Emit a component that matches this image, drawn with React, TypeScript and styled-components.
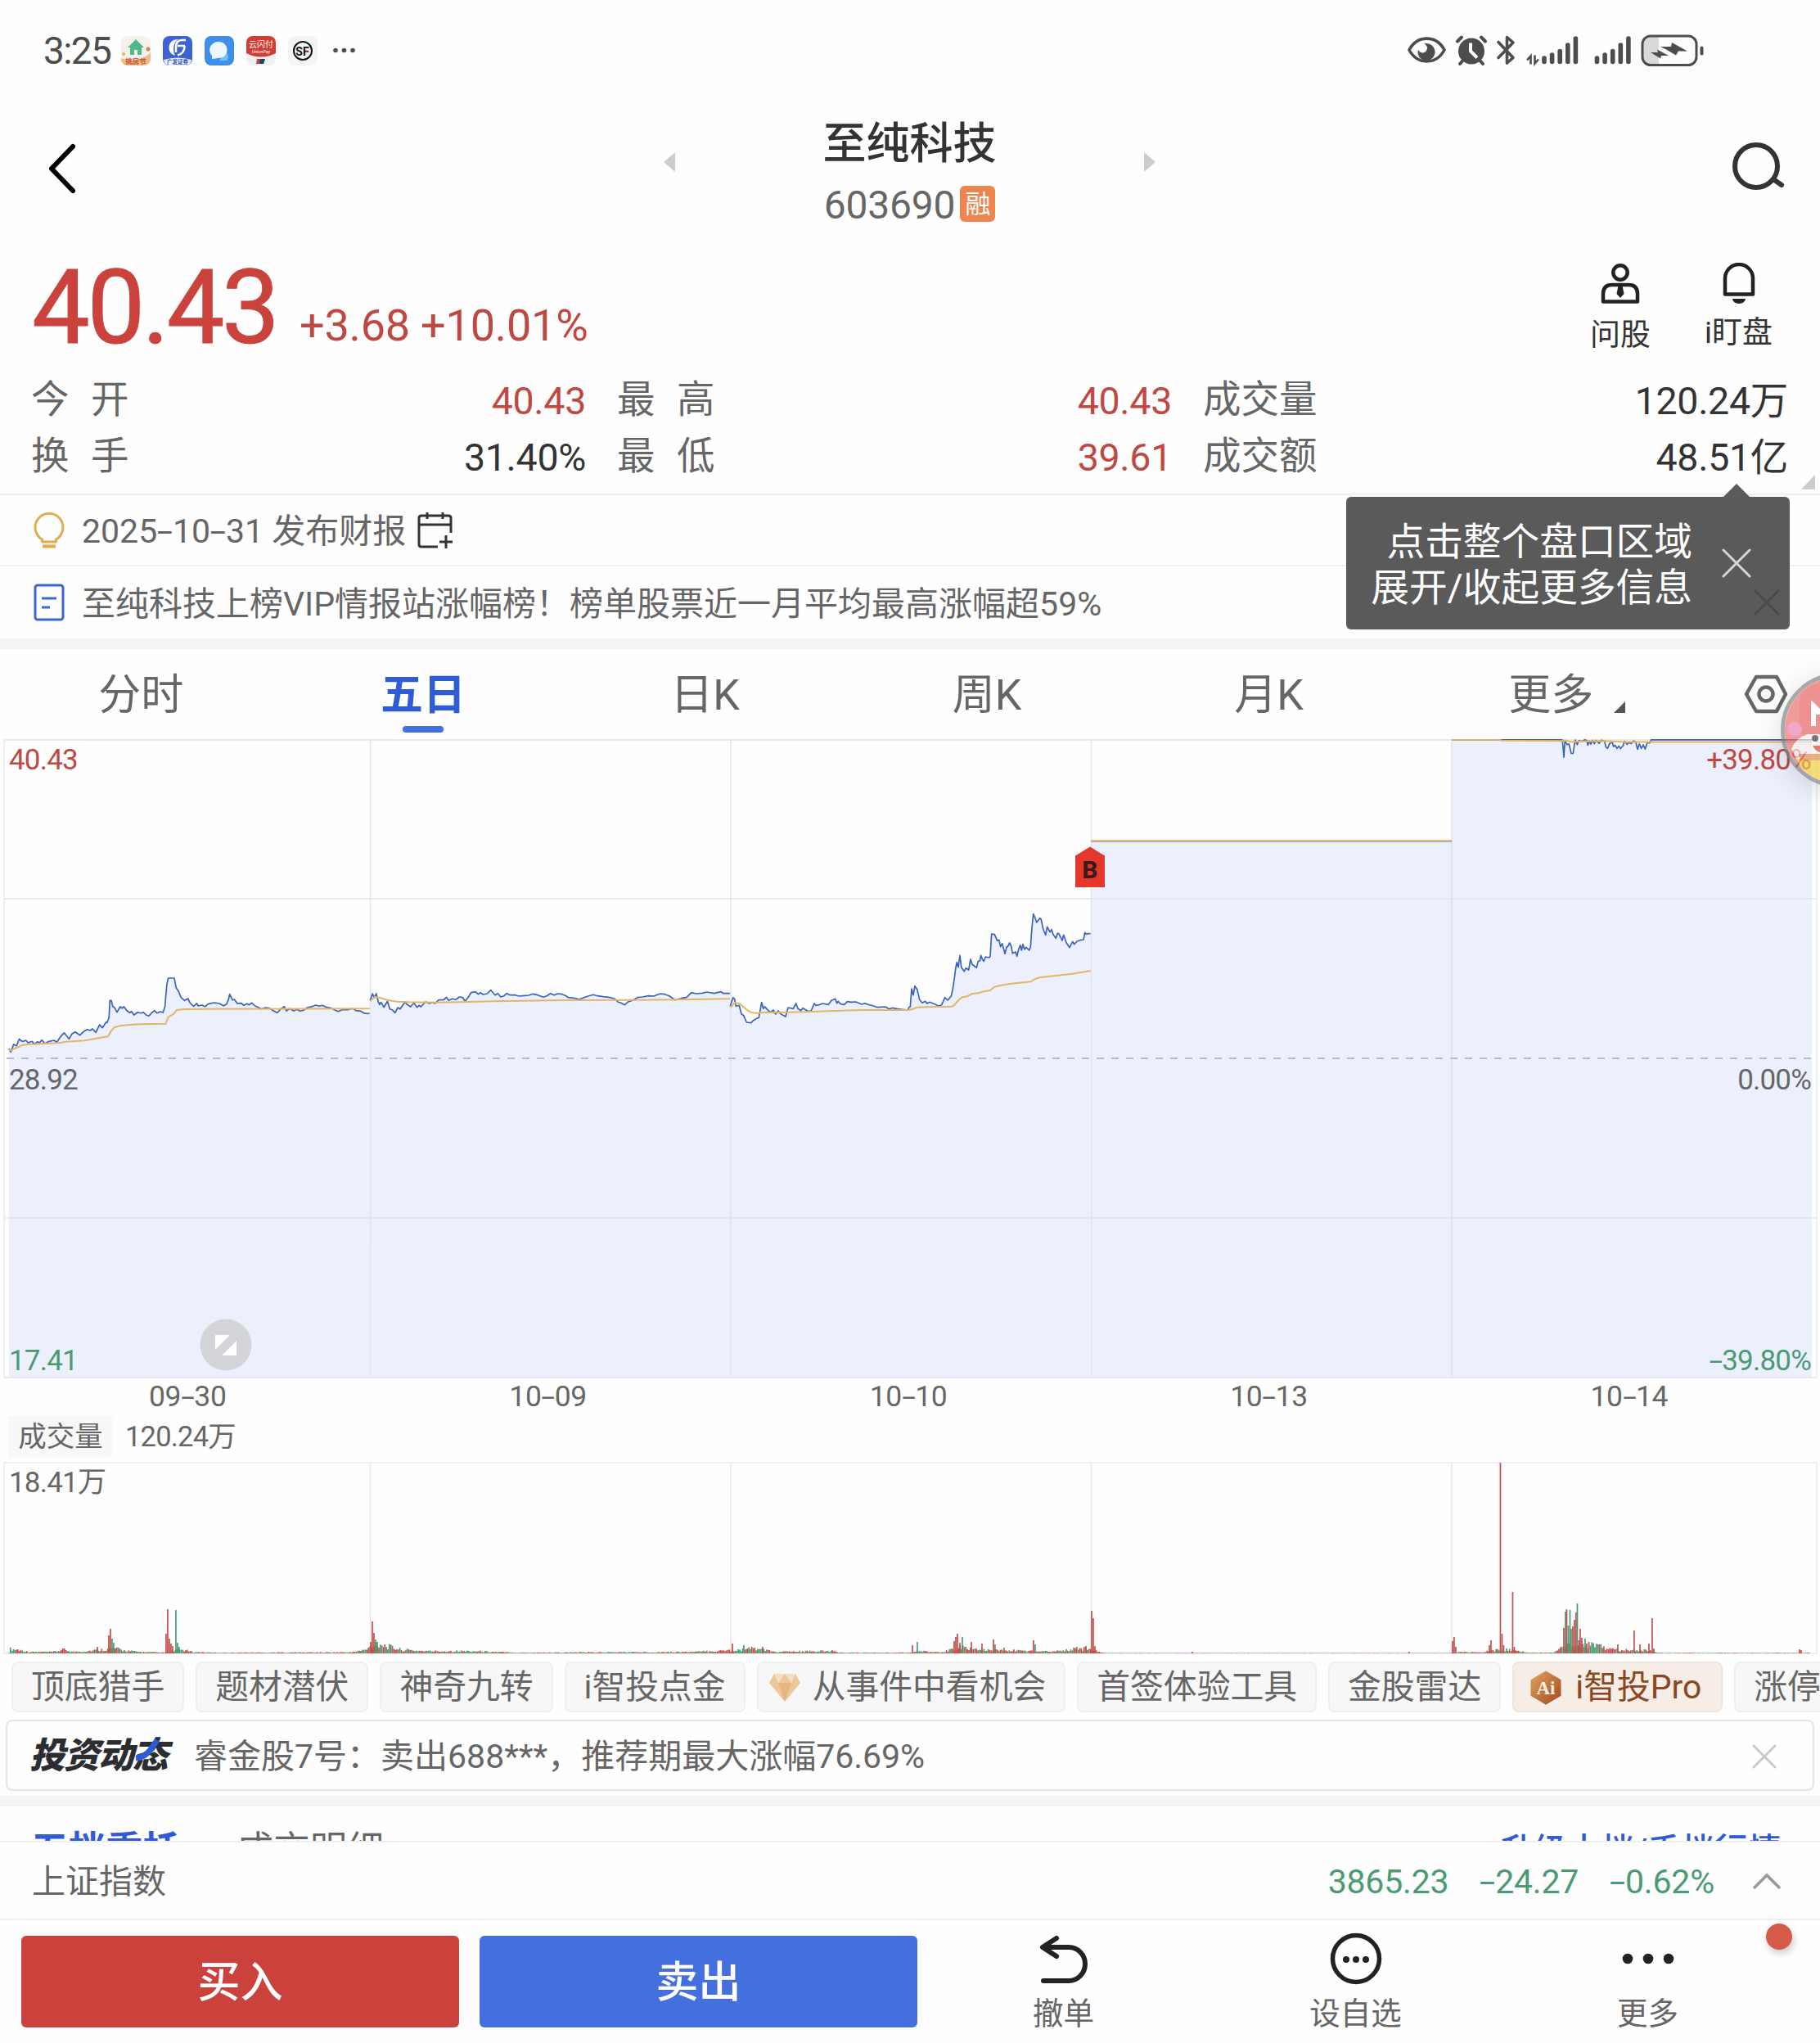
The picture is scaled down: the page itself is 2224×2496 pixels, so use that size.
import styled, { createGlobalStyle, css } from 'styled-components';

const red = '#cb423c';
const green = '#4a9a73';
const blue = '#2f5bd8';
const grey = '#666666';
const dark = '#333333';

const GlobalStyle = createGlobalStyle`
  * {
    box-sizing: border-box;
  }
  body {
    margin: 0;
    background: #fefefe;
    font-family: Roboto, "Noto Sans CJK SC", sans-serif;
    color: ${grey};
  }
  svg {
    display: block;
    flex: none;
  }
`;

const Page = styled.div`
  position: relative;
  display: flex;
  flex-direction: column;
  width: 2224px;
  height: 2496px;
  overflow: hidden;
  white-space: nowrap;
`;

// hyphen as wide as in the app's number font
const Dash = styled.i`
  display: inline-block;
  width: 0.46em;
  font-style: normal;
  text-align: center;
  transform: scaleX(1.7);
`;

const StatusBar = styled.div`
  display: flex;
  align-items: center;
  height: 122px;
  padding: 2px 141px 0 53px;
`;

const Clock = styled.span`
  width: 95px;
  font-size: 46px;
  line-height: 50px;
  letter-spacing: -1.6px;
  color: #4d4d4d;
`;

const AppIcons = styled.div`
  display: flex;
  gap: 15px;
  flex: 1;
`;

const Header = styled.div`
  display: flex;
  align-items: flex-start;
  justify-content: space-between;
  height: 178px;
  padding: 51px 41px 0 58px;
`;

const TitleArea = styled.div`
  display: flex;
  align-items: flex-start;
  justify-content: space-between;
  width: 603px;
  margin: 0 0 0 10px;
`;

const Arrow = styled.svg`
  margin-top: 12px;
`;

const TitleColumn = styled.div`
  display: flex;
  flex-direction: column;
  align-items: center;
  margin-top: -31px;
`;

const Title = styled.div`
  font-size: 53px;
  font-weight: 500;
  line-height: 68px;
  color: ${dark};
`;

const Code = styled.div`
  display: flex;
  align-items: center;
  gap: 6px;
  margin-top: 8px;
  font-size: 48px;
  line-height: 66px;
  letter-spacing: -0.2px;
`;

const Badge = styled.span`
  width: 43px;
  height: 44px;
  margin-top: -3px;
  border-radius: 6px;
  background: #ee854e;
  color: #fff;
  font-size: 31px;
  line-height: 46px;
  text-align: center;
`;

const Quote = styled.div`
  display: flex;
  height: 155px;
  padding: 21px 58px 0 39px;
`;

const Price = styled.div`
  width: 306px;
  font-size: 126px;
  line-height: 110px;
  letter-spacing: -3.4px;
  color: ${red};
  -webkit-text-stroke: 1px ${red};
`;

const Change = styled.div`
  margin: 44px 0 0 21px;
  font-size: 54px;
  line-height: 66px;
  letter-spacing: -0.2px;
  color: #c04843;
`;

const Shortcuts = styled.div`
  display: flex;
  gap: 66px;
  margin-left: auto;
`;

const Shortcut = styled.div<{ $lift?: boolean }>`
  display: flex;
  flex-direction: column;
  align-items: center;
  font-size: 37px;
  line-height: 44px;
  color: ${dark};

  span {
    margin-top: ${p => (p.$lift ? 14 : 17)}px;
  }
`;

const Stats = styled.div`
  position: relative;
  display: grid;
  grid-template-columns: 678px 678px 715px;
  grid-template-rows: 69px 69px;
  column-gap: 38px;
  height: 150px;
  padding-left: 38px;
  border-bottom: 2px solid #eeeeee;
`;

const Stat = styled.div<{ $up?: boolean }>`
  display: flex;
  justify-content: space-between;
  font-size: 46.5px;
  line-height: 69px;
  word-spacing: 15px;

  span {
    line-height: 67px;
  }
  b {
    font-weight: 400;
    letter-spacing: -0.3px;
    line-height: 70px;
    color: ${p => (p.$up ? '#c04843' : dark)};
  }
`;

const StatCorner = styled.svg`
  position: absolute;
  right: 6px;
  bottom: 5px;
`;

const Notice = styled.div<{ $line?: boolean }>`
  display: flex;
  align-items: center;
  height: 88px;
  padding-left: 41px;
  font-size: 41px;
  line-height: 60px;
  border-bottom: ${p => (p.$line ? '2px solid #f0f0f0' : 'none')};

  > span {
    margin: 3px 14px 0 21px;
  }
`;

const Tip = styled.div`
  position: absolute;
  left: 1645px;
  top: 607px;
  display: flex;
  align-items: center;
  justify-content: flex-end;
  width: 542px;
  height: 162px;
  padding-right: 47px;
  border-radius: 6px;
  background: rgba(72, 72, 72, 0.9);
  color: #fff;
  font-size: 46.7px;
  line-height: 56px;
  text-align: right;

  &::before {
    content: '';
    position: absolute;
    top: -16px;
    right: 49px;
    border: 16px solid transparent;
    border-top: 0;
    border-bottom-color: #5b5b5b;
  }

  div {
    padding-top: 3px;
  }

  svg {
    margin-left: 36px;
  }
`;

const GhostClose = styled.svg`
  position: absolute;
  right: 12px;
  bottom: 17px;
`;

const Band = styled.div`
  height: 13px;
  background: #f4f4f4;
`;

const Tabs = styled.div`
  display: flex;
  align-items: center;
  height: 110px;
`;

const Tab = styled.div<{ $active?: boolean }>`
  position: relative;
  flex: none;
  width: 344.6px;
  height: 110px;
  font-size: 52px;
  line-height: 113px;
  text-align: center;

  ${p =>
    p.$active &&
    css`
      font-weight: 700;
      color: ${blue};

      &::after {
        content: '';
        position: absolute;
        left: 147px;
        bottom: 8px;
        width: 50px;
        height: 8px;
        border-radius: 4px;
        background: #446fdf;
      }
    `}
`;

const MoreMark = styled.svg`
  position: absolute;
  right: 82px;
  bottom: 32px;
`;

const ChartBox = styled.div<{ $height: number }>`
  position: relative;
  height: ${p => p.$height}px;
`;

const AxisLabel = styled.span<{ $top: number; $right?: boolean; $color?: string }>`
  position: absolute;
  top: ${p => p.$top}px;
  ${p => (p.$right ? 'right: 11px' : 'left: 11px')};
  font-size: 35px;
  line-height: 44px;
  letter-spacing: -0.8px;
  color: ${p => p.$color || grey};
`;

const BuyMark = styled.div`
  position: absolute;
  left: 1314px;
  top: 131px;
  width: 36px;
  height: 50px;
  padding-top: 5px;
  background: #e5382d;
  clip-path: polygon(50% 0, 100% 22%, 100% 100%, 0 100%, 0 22%);
  color: #3a1a1c;
  font-size: 30px;
  font-weight: 800;
  line-height: 48px;
  text-align: center;
`;

const ExpandButton = styled.svg`
  position: absolute;
  left: 244px;
  top: 708px;
`;

const Dates = styled.div`
  display: flex;
  height: 45px;
  padding: 0 13px 0 9px;
  font-size: 35.5px;
  letter-spacing: -0.4px;
  line-height: 44px;

  > span {
    flex: 1;
    text-align: center;
  }
`;

const VolumeHead = styled.div`
  display: flex;
  align-items: center;
  gap: 15px;
  height: 57px;
  padding: 0 0 4px 10px;
  font-size: 34.5px;
  line-height: 51px;
`;

const VolumeName = styled.span`
  width: 128px;
  background: #f8f8f8;
  border-radius: 0 6px 6px 0;
  text-align: center;
`;

const VolumeValue = styled.span`
  letter-spacing: -0.8px;
`;

const Chips = styled.div`
  display: flex;
  gap: 14px;
  height: 80px;
  padding: 9px 0 0 14px;
  overflow: hidden;
`;

const Chip = styled.div<{ $pro?: boolean }>`
  display: flex;
  flex: none;
  align-items: center;
  gap: ${p => (p.$pro ? 16 : 15)}px;
  height: 62px;
  padding: 1px ${p => (p.$pro ? 24 : 22)}px 0;
  border: 2px solid ${p => (p.$pro ? '#f1e4da' : '#efefef')};
  border-radius: 8px;
  background: ${p => (p.$pro ? '#f6ede6' : '#f7f7f7')};
  color: ${p => (p.$pro ? '#8c4722' : grey)};
  font-size: 40.8px;
  line-height: 59px;

  svg {
    margin-left: ${p => (p.$pro ? -5 : -9)}px;
  }
`;

const News = styled.div`
  display: flex;
  align-items: center;
  height: 87px;
  margin: 0 7px 6px;
  padding: 2px 44px 0 27px;
  border: 2px solid #e5e5e5;
  border-radius: 8px;
  font-size: 41px;
  line-height: 60px;
`;

const NewsLogo = styled.span`
  position: relative;
  width: 174px;
  margin-right: 27px;
  font-size: 43.5px;
  font-weight: 900;
  font-style: italic;
  letter-spacing: -1.6px;
  color: #2c2d31;

  svg {
    position: absolute;
    left: 127px;
    top: 7px;
  }
`;

const NewsText = styled.span`
  flex: 1;
`;

const DepthTabs = styled.div`
  display: flex;
  gap: 66px;
  height: 42px;
  padding: 21px 47px 0 38px;
  overflow: hidden;
  font-size: 45px;
  line-height: 66px;

  b {
    width: 185px;
    font-size: 45.6px;
    color: ${blue};
  }
  a {
    margin-left: auto;
    font-size: 41px;
    font-weight: 500;
    color: ${blue};
  }
`;

const IndexRow = styled.div`
  display: flex;
  align-items: center;
  height: 97px;
  padding: 2px 46px 0 39px;
  border-top: 2px solid #efefef;
  border-bottom: 2px solid #efefef;
  font-size: 41px;
  line-height: 60px;

  span {
    flex: 1;
  }
  em {
    margin-right: 38px;
    font-style: normal;
    letter-spacing: -0.2px;
    color: ${green};
  }
  svg {
    margin-left: 7px;
  }
`;

const BottomBar = styled.div`
  position: relative;
  display: flex;
  height: 150px;
  padding: 19px 0 0 26px;
`;

const TradeButton = styled.div<{ $color: string }>`
  width: 535px;
  height: 112px;
  margin-right: 25px;
  border-radius: 6px;
  background: ${p => p.$color};
  color: #fff;
  font-size: 52px;
  font-weight: 500;
  line-height: 116px;
  text-align: center;
`;

const Action = styled.div`
  display: flex;
  flex-direction: column;
  align-items: center;
  width: 357px;
  margin-top: -6px;
  font-size: 37.5px;
  line-height: 50px;

  &:nth-child(3) {
    margin-left: -25px;
  }
  span {
    margin-top: 8px;
  }
`;

const RedDot = styled.i`
  position: absolute;
  left: 2158px;
  top: 4px;
  width: 32px;
  height: 32px;
  border-radius: 50%;
  background: #d65a4a;
  box-shadow: 2px 5px 8px rgba(0, 0, 0, 0.2);
`;

const FloatingBall = styled.div`
  position: absolute;
  left: 2176px;
  top: 822px;
  width: 140px;
  height: 140px;
  border: 5px solid #7e7e7e;
  border-radius: 50%;
  overflow: hidden;
  opacity: 0.66;
  box-shadow: 0 6px 30px rgba(0, 0, 0, 0.2);
`;

type Point = [number, number];

// "x,y x,y" in sample units -> chart pixels
function toPoints(src: string, ox: number, oy: number, kx: number, ky: number): Point[] {
  return src.split(' ').map(pair => {
    const [x, y] = pair.split(',').map(Number);
    return [x * kx + ox, y * ky + oy];
  });
}

const join = (pts: Point[]) => pts.map(([x, y]) => `${x.toFixed(1)},${y.toFixed(1)}`).join(' ');

const early = (s: string) => toPoints(s, 0, 177, 0.574, 1 / 3);
const third = (s: string) => toPoints(s, 880, 77, 1 / 3, 1 / 3);
const last = (s: string) => toPoints(s, 1760, -122.5, 1 / 3, 1 / 3);

const days = [
  {
    price: early(
      '19,603 23,616 29,588 35,593 41,568 45,575 50,577 55,573 60,582 68,577 74,587 80,578 84,582 89,572 96,585 104,577 115,573 121,580 126,567 131,555 137,546 147,568 153,550 160,542 170,554 178,541 186,533 192,537 197,531 204,544 212,516 218,527 226,506 228,508 232,490 234,427 237,427 240,449 244,454 249,470 256,450 260,455 264,450 270,464 276,472 280,467 285,480 293,470 300,473 305,470 311,480 317,484 323,472 329,464 334,473 341,468 347,471 351,450 355,370 358,345 371,345 375,380 380,393 385,415 393,427 400,420 405,437 412,448 419,438 422,447 430,444 437,449 443,440 456,435 467,438 476,446 482,441 486,425 489,404 495,425 499,423 505,438 514,437 519,445 526,439 530,443 536,436 543,447 551,453 556,458 565,453 573,455 580,463 590,472 598,458 605,449 610,465 617,457 625,465 632,460 639,466 646,463 654,453 665,449 672,444 680,448 687,445 695,452 705,455 712,461 720,467 728,461 740,461 751,456 758,464 768,466 775,473 782,475 787,474'
    ),
    avg: early(
      '19,605 24,611 30,604 40,597 48,590 60,588 90,586 128,582 140,578 180,574 200,568 220,562 230,559 236,540 243,526 255,520 275,516 300,514 353,512 358,488 370,476 376,462 390,459 450,458 787,457'
    ),
  },
  {
    price: early(
      '788,427 793,402 797,417 801,402 805,430 808,442 811,433 817,452 825,430 830,458 835,461 841,472 847,453 852,458 862,433 867,442 874,450 881,436 888,452 892,445 896,450 906,432 914,438 920,434 926,438 934,425 945,424 950,415 955,427 963,421 970,424 978,414 985,416 990,430 996,417 1003,398 1012,395 1018,404 1023,398 1028,405 1037,402 1045,389 1054,407 1060,401 1066,414 1073,410 1079,401 1086,407 1097,407 1105,411 1117,409 1125,408 1135,403 1145,407 1157,415 1164,410 1172,401 1180,407 1187,402 1197,404 1205,410 1210,416 1222,418 1233,423 1243,416 1252,411 1263,406 1272,410 1284,413 1296,415 1308,420 1316,433 1322,436 1330,443 1337,432 1347,427 1357,416 1368,414 1380,410 1392,411 1405,402 1415,404 1425,410 1437,425 1450,419 1462,415 1472,398 1482,402 1495,400 1505,396 1520,401 1535,395 1540,401 1554,401'
    ),
    avg: early(
      '788,430 793,420 798,414 808,417 825,425 845,431 870,433 930,434 980,433 1050,430 1200,426 1350,425 1440,424 1554,421'
    ),
  },
  {
    price: third(
      '37,748 47,716 53,722 58,748 70,745 78,776 86,782 97,807 113,809 122,800 132,794 142,790 152,734 158,757 164,750 175,763 185,770 195,762 203,777 213,765 222,776 240,786 249,753 268,757 278,738 285,757 296,764 303,755 320,765 333,766 345,738 352,745 362,743 376,738 397,742 408,727 422,721 428,737 433,730 440,739 455,742 466,731 480,733 497,732 520,741 530,737 540,741 562,747 577,752 605,750 620,758 632,754 650,758 688,762 692,752 697,750 702,684 708,707 714,674 722,686 731,724 741,736 752,730 758,738 768,733 790,742 801,747 812,743 824,716 834,726 847,711 852,690 858,650 864,605 868,587 873,605 879,562 884,605 895,620 901,608 911,615 918,576 924,595 940,607 946,583 952,582 956,562 962,578 967,583 973,567 986,570 990,565 995,483 1006,485 1016,508 1022,505 1028,530 1034,518 1044,556 1050,532 1055,528 1061,516 1067,528 1072,554 1083,549 1088,565 1094,540 1100,524 1105,543 1110,521 1116,540 1122,532 1133,543 1138,530 1143,460 1148,410 1154,423 1160,441 1172,425 1177,430 1184,465 1193,487 1199,457 1209,476 1215,467 1221,485 1231,499 1237,480 1243,484 1254,507 1259,487 1270,517 1281,533 1292,511 1298,521 1308,510 1320,506 1332,504 1337,478 1342,484 1350,482 1358,482'
    ),
    avg: third(
      '37,750 42,750 50,738 58,735 72,739 85,750 100,763 118,772 140,774 155,771 250,770 340,768 420,765 520,762 690,762 705,759 722,752 760,751 850,749 858,744 870,730 885,716 910,710 922,703 950,699 960,695 990,690 1005,677 1030,671 1080,664 1140,658 1150,650 1170,643 1230,636 1290,629 1340,621 1358,619'
    ),
  },
  {
    price: third('1360,143 2682,143'),
    avg: third('1360,142 2682,142'),
  },
  {
    price: last(
      '42,370 445,370 448,372 453,434 457,372 465,388 472,385 480,420 487,420 492,385 495,371 502,388 508,373 520,376 530,370 537,373 541,390 547,374 552,386 557,372 565,384 571,372 582,383 590,371 602,374 607,396 613,402 620,385 630,377 635,395 641,390 648,402 655,393 661,402 670,392 675,375 685,387 690,380 700,384 708,374 717,378 723,405 730,385 737,402 744,388 751,404 757,386 761,378 767,382 773,370 1362,370'
    ),
    avg: last('42,370 215,370 225,373 445,374 460,372 480,378 520,376 600,374 680,378 1362,378'),
  },
];

const gridX = [452.5, 893, 1333.5, 1774];

function PriceChart() {
  return (
    <svg width="2224" height="781" fill="none">
      {days.map((d, i) => {
        const end = d.price[d.price.length - 1][0];
        return (
          <polygon
            key={i}
            points={`${join(d.price)} ${end},780 ${d.price[0][0]},780`}
            fill="#ecf0fd"
          />
        );
      })}
      <path d="M5 1H2220M5 195H2220M5 585H2220M5 780H2220" stroke="#dfe1e8" strokeOpacity=".7" strokeWidth="2" />
      <path d="M5 1V780M2220 1V780" stroke="#efefef" strokeWidth="2" />
      {gridX.map(x => (
        <path key={x} d={`M${x} 1V780`} stroke="#dcdfe8" strokeOpacity=".8" strokeWidth="1.5" />
      ))}
      <path d="M8 390H2214" stroke="#b9bdc9" strokeWidth="2" strokeDasharray="9 9" />
      {days.map((d, i) => (
        <g key={i} strokeWidth="1.7" strokeLinejoin="round">
          <polyline points={join(d.price)} stroke="#3a63bd" />
          <polyline points={join(d.avg)} stroke="#e3b566" strokeWidth="2" />
        </g>
      ))}
    </svg>
  );
}

// background level of the volume: x, height
const level: Point[] = [
  [11, 6], [22, 5], [35, 2], [65, 2], [78, 5], [90, 2], [105, 3], [125, 5], [140, 7], [150, 4], [170, 2],
  [200, 1], [222, 5], [235, 2], [260, 1], [430, 1.5], [448, 5], [460, 14], [475, 9], [490, 5], [520, 3],
  [580, 3], [630, 1], [850, 2], [890, 4], [905, 5], [925, 7], [945, 2], [1010, 3], [1030, 1], [1112, 1],
  [1124, 3], [1150, 1], [1172, 8], [1190, 6], [1205, 4], [1235, 4], [1260, 3], [1280, 3], [1295, 3],
  [1320, 7], [1332, 6], [1342, 2], [1352, 0.5], [1770, 0.4], [1785, 2], [1810, 1], [1822, 4], [1840, 5],
  [1855, 3], [1870, 1], [1898, 1], [1909, 10], [1945, 11], [1960, 8], [1975, 5], [2020, 4], [2025, 0.7], [2214, 0.7],
];

// single tall bars: x, height, 1 = rise / 0 = fall
const spikes = [
  [119, 8, 1], [133, 22, 1], [135, 30, 1], [137, 18, 0], [139, 13, 0], [203, 24, 1], [205, 54, 1], [207, 18, 1],
  [209, 12, 1], [211, 9, 1], [215, 53, 0], [217, 13, 0], [219, 8, 0], [453, 14, 1], [455, 39, 1], [457, 25, 1],
  [459, 17, 0], [461, 14, 0], [895, 12, 1], [909, 10, 0], [932, 8, 1], [1017, 4, 1], [1115, 10, 1], [1121, 14, 0],
  [1166, 15, 1], [1168, 20, 1], [1170, 24, 1], [1173, 13, 1], [1176, 20, 0], [1187, 14, 1], [1200, 12, 1],
  [1214, 17, 1], [1216, 11, 0], [1227, 7, 0], [1263, 16, 1], [1265, 11, 0], [1327, 9, 1], [1334, 52, 1],
  [1336, 43, 1], [1338, 9, 1], [1457, 2, 1], [1722, 2, 1], [1775, 15, 1], [1777, 20, 1], [1779, 8, 1], [1820, 10, 1],
  [1822, 16, 1], [1833.5, 233, 1], [1835.5, 24, 1], [1837.5, 10, 1], [1848.5, 75, 1], [1850.5, 8, 1], [1911, 31, 1],
  [1913, 51, 0], [1914.5, 54, 1], [1916.5, 34, 0], [1918.5, 53, 0], [1920, 30, 0], [1922, 33, 1], [1924, 41, 1],
  [1926, 50, 1], [1927.5, 61, 0], [1929.5, 16, 1], [1931, 30, 1], [1933, 19, 1], [1937, 18, 0], [1939, 12, 1],
  [1977, 11, 1], [1997, 28, 1], [2004, 11, 1], [2015, 12, 1], [2019, 43, 1], [2021, 6, 1], [2199, 5, 1], [2201, 4, 1],
];

function levelAt(x: number) {
  const i = level.findIndex(p => p[0] >= x);
  if (i <= 0) return 1;
  const [x0, y0] = level[i - 1];
  const [x1, y1] = level[i];
  return y0 + ((y1 - y0) * (x - x0)) / (x1 - x0);
}

function VolumeChart() {
  const bars = Array.from({ length: 1203 }, (_, i) => {
    const x = 11 + i * 1.83;
    const r = Math.abs(Math.sin(i * 12.9898) * 43758.5453) % 1;
    const c = Math.abs(Math.sin(i * 4.137) * 9631.27) % 1;
    return [x, levelAt(x) * (0.5 + r * 0.8), c > 0.47 ? 1 : 0];
  });
  return (
    <svg width="2224" height="235">
      <path d="M5 1H2220V234H5Z" fill="none" stroke="#efefef" strokeWidth="2" />
      {gridX.map(x => (
        <path key={x} d={`M${x} 1V234`} stroke="#e8e8e8" strokeWidth="1.5" />
      ))}
      {[...bars, ...spikes].map(([x, h, up], i) => (
        <rect key={i} x={x - 0.9} y={234 - h} width="1.7" height={h} fill={up ? '#c4504c' : '#4c9b76'} />
      ))}
    </svg>
  );
}

function AppTiles() {
  return (
    <AppIcons>
      <svg width="36" height="36" viewBox="0 0 36 36">
        <rect width="36" height="36" rx="8" fill="#f6f1ea" />
        <path d="M0 27C10 31 26 31 36 20V28A8 8 0 0 1 28 36H8A8 8 0 0 1 0 28Z" fill="#f0b98a" />
        <path d="M18 4L28 14H25V23H20V17H16V23H11V14H8Z" fill="#4fb98b" />
        <circle cx="33" cy="16" r="2.5" fill="#d9853f" />
        <circle cx="3" cy="22" r="2" fill="#e8b36c" />
        <text x="18" y="33.5" fontSize="8.5" fontWeight="700" textAnchor="middle" fill="#c2552b">挑房节</text>
      </svg>
      <svg width="36" height="36" viewBox="0 0 36 36">
        <rect width="36" height="36" rx="8" fill="#3c63cf" />
        <path d="M1 29Q18 24 35 29Q34 36 28 36H8Q2 36 1 29Z" fill="#e9eefb" />
        <path d="M19 4C11 4 7.500 9 7.500 14C7.500 20 11 23 15 23.500C12 19 12 8 19 4Z" fill="#fff" />
        <path d="M28 5H23C18 5 16 9 16 14V20M27 12H18M26.500 12C26.500 18 24 22 18 23.500" fill="none" stroke="#fff" strokeWidth="2.600" />
        <text x="18" y="34" fontSize="6.5" fontWeight="700" textAnchor="middle" fill="#3556ab">广发证券</text>
      </svg>
      <svg width="36" height="36" viewBox="0 0 36 36">
        <rect width="36" height="36" rx="8" fill="#3e8fea" />
        <path d="M24 20C30 20 30 28 27 30H18Z" fill="#66c4f5" />
        <path d="M17 7C31 7 31 27 17 27L9 28L9 24C3 18 7 7 17 7Z" fill="#eef6fd" />
      </svg>
      <svg width="36" height="36" viewBox="0 0 36 36">
        <rect width="36" height="36" rx="8" fill="#f1f0f0" />
        <path d="M0 8A8 8 0 0 1 8 0H28A8 8 0 0 1 36 8V21Q18 30 0 21Z" fill="#d33c33" />
        <path d="M13 28H18L16.500 34H12Z" fill="#c7403a" />
        <path d="M17 28H23L21 34H16Z" fill="#20415f" />
        <text x="18" y="14" fontSize="10" textAnchor="middle" fill="#fff">云闪付</text>
        <text x="18" y="21" fontSize="5.500" fontStyle="italic" textAnchor="middle" fill="#fff">UnionPay</text>
      </svg>
      <svg width="36" height="36" viewBox="0 0 36 36">
        <rect width="36" height="36" rx="8" fill="#f4f4f4" />
        <circle cx="18" cy="18" r="11" fill="none" stroke="#111" strokeWidth="2" />
        <text x="17.500" y="23.500" fontSize="14" fontWeight="700" textAnchor="middle" fill="#111">SF</text>
        <circle cx="22.500" cy="18.500" r="1.300" fill="#d33" />
      </svg>
      <svg width="32" height="36" fill="#4d4d4d">
        <circle cx="7" cy="17.500" r="2.800" />
        <circle cx="17.500" cy="17.500" r="2.800" />
        <circle cx="28" cy="17.500" r="2.800" />
      </svg>
    </AppIcons>
  );
}

function SystemIcons() {
  const tops = [26, 22, 17.5, 10, 2];
  return (
    <svg width="364" height="40" viewBox="1719 41.500 364 40" fill="none" stroke="#4d4d4d">
      <path d="M1722 60.500C1732 42 1755 42 1765 60.500C1755 79 1732 79 1722 60.500Z" strokeWidth="3.600" />
      <path d="M1740 53A10.500 10.500 0 1 1 1733 60A5.600 5.600 0 1 0 1740 53Z" fill="#4d4d4d" stroke="none" />
      <circle cx="1798" cy="62" r="16" fill="#4d4d4d" stroke="none" />
      <path d="M1781 50L1786 45M1815 50L1810 45M1787 74L1784 77.500M1809 74L1812 77.500" strokeWidth="4" strokeLinecap="round" />
      <path d="M1797 52V62L1805 70" stroke="#fefefe" strokeWidth="4" />
      <path d="M1831 51L1849 70L1841.500 76.500V45L1849 51.500L1831 70" strokeWidth="3.600" strokeLinejoin="round" strokeLinecap="round" />
      <path d="M1870.500 78V68L1866 73M1875.500 67V77L1880 72" strokeWidth="2.600" />
      {[1887, 1951.5].map(start =>
        tops.map((t, i) => (
          <path key={start + i} d={`M${start + i * 9.6} ${44.5 + t}V75`} strokeWidth="5.600" strokeLinecap="round" />
        ))
      )}
      <path d="M2027 44V78H2018Q2007 78 2007 67V55Q2007 44 2018 44Z" fill="#d9d9d9" stroke="none" />
      <rect x="2007" y="43.500" width="66" height="35.500" rx="10" strokeWidth="3" />
      <path d="M2079.500 58V65" strokeWidth="4" strokeLinecap="round" />
      <path d="M2029 56.500H2042L2043 51.500L2062 62H2051L2048 67L2037 60.500ZM2017 63.500H2026L2025 60L2039 67.500H2030L2029 71Z" fill="#4d4d4d" stroke="none" />
    </svg>
  );
}

function Close({ size, color, width = 3 }: { size: number; color: string; width?: number }) {
  return (
    <svg width={size} height={size} viewBox={`0 0 ${size} ${size}`}>
      <path d={`M2 2L${size - 2} ${size - 2}M${size - 2} 2L2 ${size - 2}`} stroke={color} strokeWidth={width} strokeLinecap="round" />
    </svg>
  );
}

const stats = [
  ['今 开', '40.43', true],
  ['最 高', '40.43', true],
  ['成交量', '120.24万', false],
  ['换 手', '31.40%', false],
  ['最 低', '39.61', true],
  ['成交额', '48.51亿', false],
] as const;

const dates = [
  ['09', '30'],
  ['10', '09'],
  ['10', '10'],
  ['10', '13'],
  ['10', '14'],
];

export default function App() {
  return (
    <>
      <GlobalStyle />
      <Page>
        <StatusBar>
          <Clock>3:25</Clock>
          <AppTiles />
          <SystemIcons />
        </StatusBar>

        <Header>
          <svg width="38" height="66" fill="none">
            <path d="M31 6L5 33L31 60" stroke="#000" strokeWidth="6" strokeLinecap="round" strokeLinejoin="round" />
          </svg>
          <TitleArea>
            <Arrow width="16" height="26">
              <path d="M1 13L15 1V25Z" fill="#ccc" />
            </Arrow>
            <TitleColumn>
              <Title>至纯科技</Title>
              <Code>
                603690<Badge>融</Badge>
              </Code>
            </TitleColumn>
            <Arrow width="16" height="26">
              <path d="M15 13L1 1V25Z" fill="#ccc" />
            </Arrow>
          </TitleArea>
          <svg width="66" height="62" fill="none" stroke={dark} strokeWidth="6" strokeLinecap="round">
            <circle cx="29" cy="30" r="26" />
            <path d="M50 46L60 53" />
          </svg>
        </Header>

        <Quote>
          <Price>40.43</Price>
          <Change>+3.68 +10.01%</Change>
          <Shortcuts>
            <Shortcut>
              <svg width="48" height="50" fill="none" stroke="#222" strokeWidth="4.500">
                <circle cx="24" cy="12" r="8.700" />
                <path d="M3 47.500V38Q3 27 14 27H34Q45 27 45 38V47.500Z" strokeLinejoin="round" />
                <path d="M21.500 28H26.500L28.500 38L24 43L19.500 38Z" fill="#222" stroke="none" />
              </svg>
              <span>问股</span>
            </Shortcut>
            <Shortcut $lift>
              <svg width="40" height="50" fill="none">
                <path d="M3 38.500V19A17 17 0 0 1 37 19V38.500Z" stroke="#222" strokeWidth="4.500" strokeLinejoin="round" />
                <path d="M12 44H28A8 6 0 0 1 12 44Z" fill="#222" />
              </svg>
              <span>i盯盘</span>
            </Shortcut>
          </Shortcuts>
        </Quote>

        <Stats>
          {stats.map(([label, value, up]) => (
            <Stat key={label} $up={up}>
              <span>{label}</span>
              <b>{value}</b>
            </Stat>
          ))}
          <StatCorner width="17" height="18">
            <path d="M0 18L17 0V18Z" fill="#ccc" />
          </StatCorner>
        </Stats>

        <Notice $line>
          <svg width="38" height="47" fill="none" stroke="#e3ab4c" strokeWidth="3">
            <path d="M10.500 38V35A17 17 0 1 1 27.500 35V38Z" strokeLinejoin="round" />
            <path d="M11 43.500H27" strokeWidth="4" />
          </svg>
          <span>
            2025<Dash>-</Dash>10<Dash>-</Dash>31 发布财报
          </span>
          <svg width="44" height="46" fill="none" stroke={dark} strokeWidth="3">
            <path d="M41 26V8Q41 5 38 5H5Q2 5 2 8V40Q2 43 5 43H25M2 16H41M12 1V9M31 1V9M35 29V45M27 37H43" />
          </svg>
        </Notice>
        <Notice>
          <svg width="38" height="46" fill="none" stroke="#3b66d8" strokeWidth="3">
            <rect x="2" y="2" width="34" height="42" rx="3" />
            <path d="M10 18H28M10 29H20" />
          </svg>
          <span>至纯科技上榜VIP情报站涨幅榜！榜单股票近一月平均最高涨幅超59%</span>
        </Notice>

        <Band />

        <Tabs>
          <Tab>分时</Tab>
          <Tab $active>五日</Tab>
          <Tab>日K</Tab>
          <Tab>周K</Tab>
          <Tab>月K</Tab>
          <Tab>
            更多
            <MoreMark width="14" height="14">
              <path d="M0 14L14 0V14Z" fill="#555" />
            </MoreMark>
          </Tab>
          <svg width="156" height="50" fill="none" stroke="#666" strokeWidth="4.500">
            <path d="M78 4H103L114 25L103 46H78L66 25Z" strokeLinejoin="round" />
            <circle cx="90" cy="25" r="8.500" />
          </svg>
        </Tabs>

        <ChartBox $height={781}>
          <PriceChart />
          <AxisLabel $top={4} $color="#c04843">40.43</AxisLabel>
          <AxisLabel $top={4} $right $color="#c04843">+39.80%</AxisLabel>
          <AxisLabel $top={395}>28.92</AxisLabel>
          <AxisLabel $top={395} $right>0.00%</AxisLabel>
          <AxisLabel $top={738} $color={green}>17.41</AxisLabel>
          <AxisLabel $top={738} $right $color={green}>
            <Dash>-</Dash>39.80%
          </AxisLabel>
          <BuyMark>B</BuyMark>
          <ExpandButton width="64" height="64">
            <circle cx="32" cy="32" r="31.500" fill="#d4d5d9" />
            <path d="M19 20H37L19 38ZM45 27V45H27Z" fill="#fff" />
          </ExpandButton>
        </ChartBox>

        <Dates>
          {dates.map(([month, day]) => (
            <span key={month + day}>
              {month}
              <Dash>-</Dash>
              {day}
            </span>
          ))}
        </Dates>

        <VolumeHead>
          <VolumeName>成交量</VolumeName>
          <VolumeValue>120.24万</VolumeValue>
        </VolumeHead>
        <ChartBox $height={235}>
          <VolumeChart />
          <AxisLabel $top={4}>18.41万</AxisLabel>
        </ChartBox>

        <Chips>
          <Chip>顶底猎手</Chip>
          <Chip>题材潜伏</Chip>
          <Chip>神奇九转</Chip>
          <Chip>i智投点金</Chip>
          <Chip>
            <svg width="38" height="34">
              <path d="M6 0H32L38 11L19 34L0 11Z" fill="#edc797" />
              <path d="M6 0L11 11L19 0L27 11L32 0Z" fill="#f6dfc0" />
              <path d="M11 11H27L19 34Z" fill="#e4b782" />
            </svg>
            从事件中看机会
          </Chip>
          <Chip>首签体验工具</Chip>
          <Chip>金股雷达</Chip>
          <Chip $pro>
            <svg width="40" height="42">
              <defs>
                <linearGradient id="ai" x1="0" y1="0" x2="1" y2="1">
                  <stop offset="0" stopColor="#dfa15f" />
                  <stop offset="1" stopColor="#a34d1f" />
                </linearGradient>
              </defs>
              <path d="M20 2L37 12V30L20 40L3 30V12Z" fill="url(#ai)" stroke="url(#ai)" strokeWidth="3" strokeLinejoin="round" />
              <text x="20" y="28.500" fontFamily="Liberation Serif" fontSize="23" fontWeight="700" textAnchor="middle" fill="#fff3e0">Ai</text>
            </svg>
            i智投Pro
          </Chip>
          <Chip>涨停聚焦</Chip>
        </Chips>

        <News>
          <NewsLogo>
            投资动态
            <svg width="40" height="34" fill="none">
              <path d="M3 25C16 24 20 16 29 3" stroke={blue} strokeWidth="7" />
            </svg>
          </NewsLogo>
          <NewsText>睿金股7号：卖出688***，推荐期最大涨幅76.69%</NewsText>
          <Close size={30} color="#c9c9c9" />
        </News>

        <Band />

        <DepthTabs>
          <b>五档委托</b>
          <span>成交明细</span>
          <a>升级十档/千档行情</a>
        </DepthTabs>

        <IndexRow>
          <span>上证指数</span>
          <em>3865.23</em>
          <em>
            <Dash>-</Dash>24.27
          </em>
          <em>
            <Dash>-</Dash>0.62%
          </em>
          <svg width="38" height="24" fill="none">
            <path d="M3 20L19 4L35 20" stroke="#999" strokeWidth="3.500" />
          </svg>
        </IndexRow>

        <BottomBar>
          <TradeButton $color="#cb423c">买入</TradeButton>
          <TradeButton $color="#446fdf">卖出</TradeButton>
          <Action>
            <svg width="64" height="68" fill="none" stroke="#222" strokeWidth="6" strokeLinecap="round" strokeLinejoin="round">
              <path d="M23 9L6 20L23 31M7 20H38A20 20.500 0 0 1 38 61H7" />
            </svg>
            <span>撤单</span>
          </Action>
          <Action>
            <svg width="66" height="68" fill="#222">
              <circle cx="33" cy="34" r="28.500" fill="none" stroke="#222" strokeWidth="5.500" />
              <circle cx="21" cy="35" r="4" />
              <circle cx="33" cy="35" r="4" />
              <circle cx="45" cy="35" r="4" />
            </svg>
            <span>设自选</span>
          </Action>
          <Action>
            <svg width="66" height="68" fill="#222">
              <circle cx="8" cy="34" r="6.300" />
              <circle cx="33" cy="34" r="6.300" />
              <circle cx="58" cy="34" r="6.300" />
            </svg>
            <span>更多</span>
          </Action>
          <RedDot />
        </BottomBar>

        <Tip>
          <div>
            点击整个盘口区域
            <br />
            展开/收起更多信息
          </div>
          <Close size={36} color="#d6d6d6" />
          <GhostClose width="32" height="32">
            <path d="M1 1L31 31M31 1L1 31" stroke="#4a4a4a" strokeWidth="3" />
          </GhostClose>
        </Tip>

        <FloatingBall>
          <svg width="130" height="130">
            <rect width="130" height="130" fill="#ec6b68" />
            <path d="M18 30Q20 14 40 8L130 0V70H18Z" fill="#e65a5c" />
            <path d="M32 28L44 40L60 40V46H38V60H32Z" fill="#fff" />
            <circle cx="12" cy="64" r="9" fill="#ea7bb0" />
            <path d="M8 88Q14 74 28 70H130V100H14Z" fill="#f8f1ec" />
            <circle cx="37" cy="75" r="4" fill="#333" />
            <path d="M34 84Q40 97 60 92V84Z" fill="#d03c2e" />
            <path d="M14 100H130V130H30Z" fill="#f2cb3c" />
            <path d="M18 98H45" stroke="#e28a48" strokeWidth="8" />
          </svg>
        </FloatingBall>
      </Page>
    </>
  );
}
